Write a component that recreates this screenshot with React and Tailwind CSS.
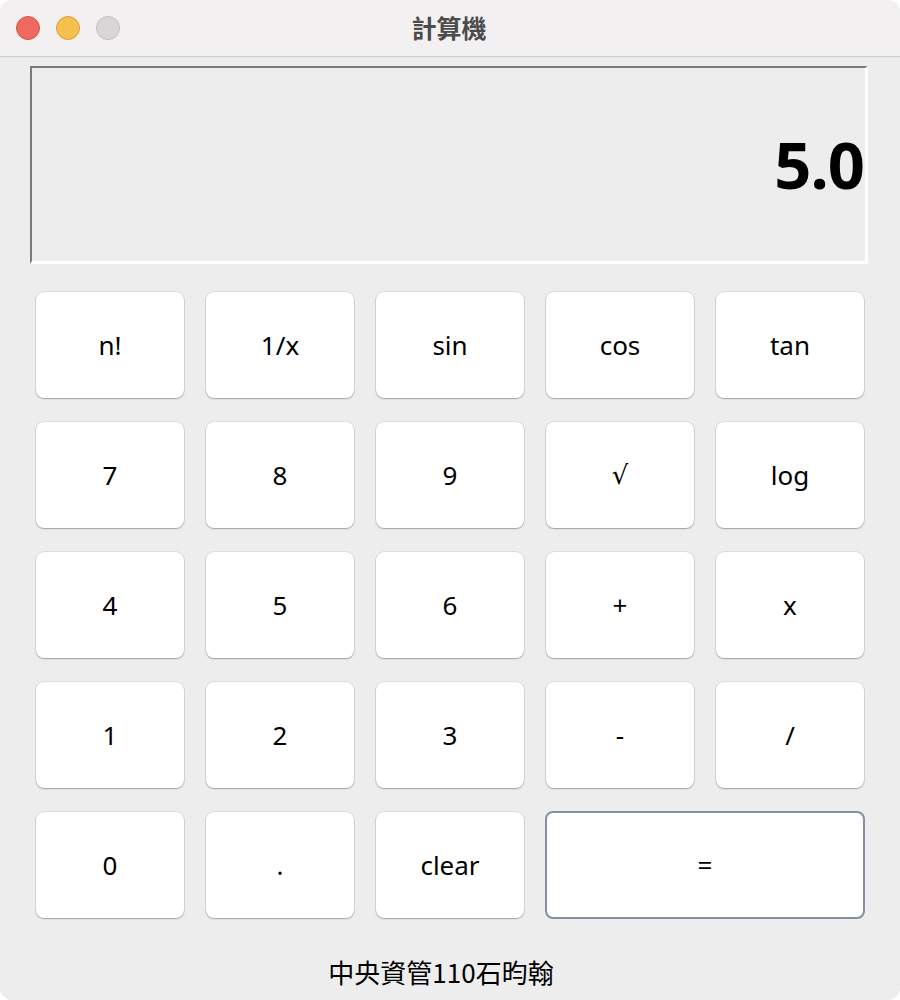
import React from "react";

const rows = [
  ["n!", "1/x", "sin", "cos", "tan"],
  ["7", "8", "9", "√", "log"],
  ["4", "5", "6", "+", "x"],
  ["1", "2", "3", "-", "/"],
];

function Btn({ label }) {
  const special = label === "√";
  return (
    <div className="h-[106px] bg-white rounded-[8px] flex items-center justify-center text-[26px] text-black shadow-[0_0_0_0.5px_rgba(0,0,0,0.13),0_1px_1.5px_rgba(0,0,0,0.28)]">
      <span style={special ? { fontFamily: '"DejaVu Sans", sans-serif' } : undefined}>{label}</span>
    </div>
  );
}

export default function App() {
  return (
    <div className="w-[900px] h-[1000px] bg-white" style={{ fontFamily: '"Noto Sans", "Noto Sans CJK TC", sans-serif' }}>
      <div className="w-[900px] h-[1000px] rounded-[12px] overflow-hidden bg-[#ededed] flex flex-col">
        <div className="h-[57px] shrink-0 bg-[#f2f0f1] border-b border-[#cdcdcd] relative flex items-center justify-center">
          <div className="absolute left-[16px] top-[16px] flex gap-[16px]">
            <div className="w-[24px] h-[24px] rounded-full bg-[#ee6a5f] border border-[#d5544a]" />
            <div className="w-[24px] h-[24px] rounded-full bg-[#f5c04f] border border-[#d9a23a]" />
            <div className="w-[24px] h-[24px] rounded-full bg-[#d8d6d7] border border-[#c2c0c1]" />
          </div>
          <span className="text-[25px] font-bold text-[#4b4b4b] pr-[2px]" style={{ fontFamily: '"Noto Sans CJK TC", sans-serif' }}>計算機</span>
        </div>
        <div className="ml-[30px] mt-[9px] w-[838px] h-[198px] border-t-2 border-l-2 border-t-[#7b7b7b] border-l-[#7b7b7b] border-r-[3px] border-b-[3px] border-r-white border-b-white bg-[#ededed] flex items-center justify-end pr-[1px]">
          <span className="text-[65px] font-bold leading-none text-black tracking-[-1px]">5.0</span>
        </div>
        <div className="ml-[36px] mt-[28px] w-[828px] grid grid-cols-5 gap-x-[22px] gap-y-[24px]">
          {rows.flat().map((l, i) => (
            <Btn key={i} label={l} />
          ))}
          <Btn label="0" />
          <Btn label="." />
          <Btn label="clear" />
          <div className="col-span-2 -mx-[1px] -my-[1px] h-[108px] bg-white rounded-[8px] border-2 border-[#8390a4] flex items-center justify-center text-[26px] text-black">
            =
          </div>
        </div>
        <div className="mt-[41px] pr-[18px] text-center text-[26px] text-black leading-none" style={{ fontFamily: '"Noto Sans CJK TC", sans-serif' }}>
          中央資管110石昀翰
        </div>
      </div>
    </div>
  );
}
